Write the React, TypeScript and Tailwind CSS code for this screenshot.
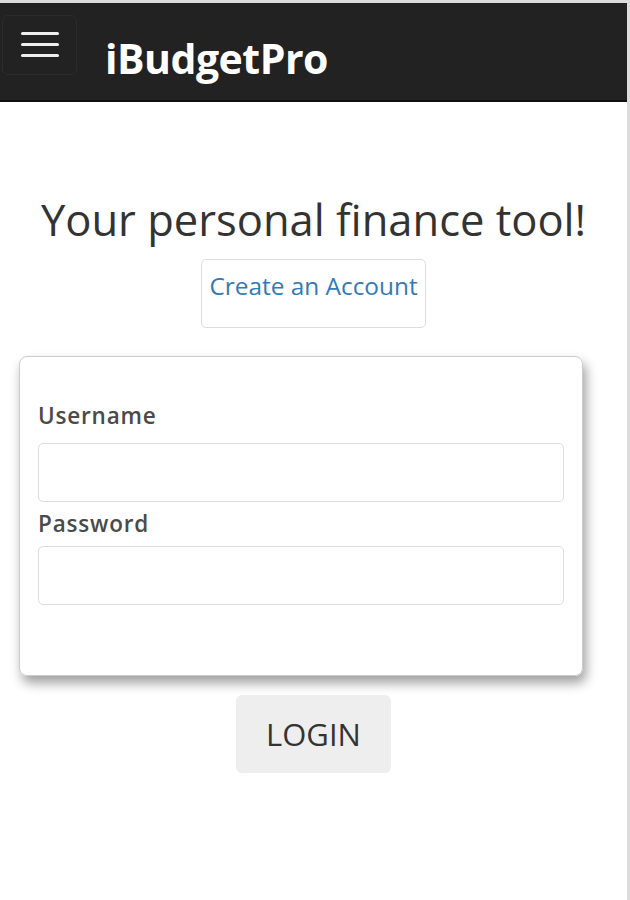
import React from 'react'

const App = () => {
  return (
    <div className="min-h-[900px] w-[630px] bg-white border-t-[3px] border-r-[3px] border-[#dcdcdc] font-['Open_Sans',sans-serif] text-[#333]">
      <nav className="h-[99px] bg-[#222] border-b-2 border-[#101010] flex items-center">
        <button className="ml-[2px] mt-[-14px] w-[75px] h-[60px] rounded-[6px] border border-[#2c2c2c] flex flex-col items-center justify-center gap-[8px]">
          <span className="block w-[38px] h-[3px] bg-[#eee] rounded-sm"></span>
          <span className="block w-[38px] h-[3px] bg-[#eee] rounded-sm"></span>
          <span className="block w-[38px] h-[3px] bg-[#eee] rounded-sm"></span>
        </button>
        <span className="ml-[28px] mt-[14px] text-white text-[41px] font-bold tracking-[-0.5px]">iBudgetPro</span>
      </nav>

      <main className="flex flex-col items-center">
        <h1 className="mt-[92px] text-[43.5px] leading-[52px] text-[#333] whitespace-nowrap">Your personal finance tool!</h1>
        <a className="mt-[13px] w-[225px] h-[69px] border border-[#ddd] rounded-[5px] text-[#337ab7] text-[24.4px] text-center pt-[8px]">
          Create an Account
        </a>

        <form className="mt-[28px] w-[564px] ml-[-25px] h-[320px] border border-[#ccc] rounded-[8px] shadow-[3px_7px_12px_rgba(0,0,0,0.38)] px-[18px] pt-[44px]">
          <label className="block text-[22.5px] leading-[30px] font-semibold tracking-[0.8px] text-[#4a4a4a]">Username</label>
          <input type="text" className="mt-[12px] block w-full h-[59px] border border-[#ddd] rounded-[5px]" />
          <label className="block mt-[2px] text-[22.5px] leading-[40px] font-semibold tracking-[0.8px] text-[#4a4a4a]">Password</label>
          <input type="password" className="mt-[2px] block w-full h-[59px] border border-[#ddd] rounded-[5px]" />
        </form>

        <button className="mt-[19px] w-[155px] h-[78px] bg-[#eee] rounded-[6px] text-[31px] text-[#333]">LOGIN</button>
      </main>
    </div>
  )
}

export default App
